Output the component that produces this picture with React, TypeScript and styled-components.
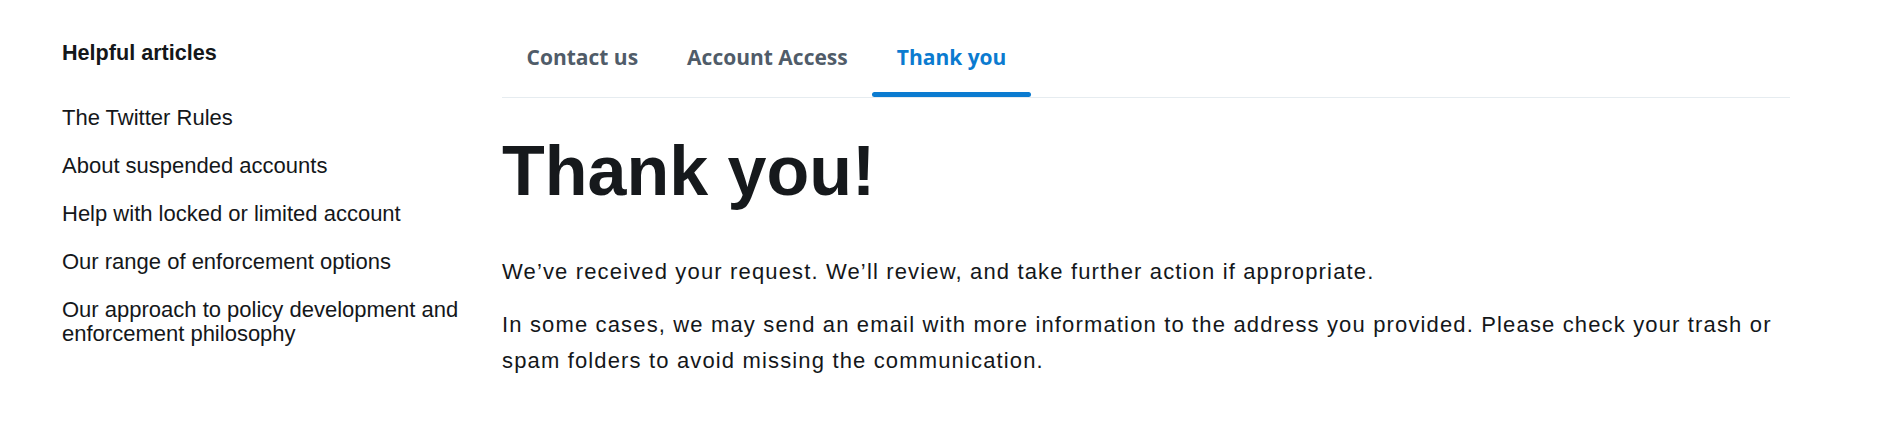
import React, { ReactElement } from 'react';
import styled, { createGlobalStyle, css } from 'styled-components';

const GlobalStyle = createGlobalStyle`
  html, body {
    margin: 0;
    padding: 0;
    background: #ffffff;
  }
  body {
    font-family: "Liberation Sans", Arial, sans-serif;
    color: #14171a;
  }
`;

const Page = styled.div`
  display: flex;
  gap: 40px;
  padding: 41px 109px 0 62px;
  box-sizing: border-box;
  width: 1899px;
  min-height: 440px;
`;

const Sidebar = styled.aside`
  flex: 0 0 400px;
`;

const SideHeading = styled.h2`
  margin: 0 0 41px;
  font-size: 21.6px;
  line-height: 24px;
  font-weight: 700;
  color: #14171a;
`;

const ArticleList = styled.ul`
  list-style: none;
  margin: 0;
  padding: 0;
  display: flex;
  flex-direction: column;
  gap: 24px;
`;

const ArticleLink = styled.a`
  display: block;
  font-size: 22px;
  line-height: 24px;
  color: #14171a;
  text-decoration: none;
`;

const Main = styled.main`
  flex: 1;
  min-width: 0;
`;

const TabBar = styled.nav`
  display: flex;
  border-bottom: 1px solid #e6ecf0;
`;

const Tab = styled.a<{ $active?: boolean }>`
  position: relative;
  padding: 2px 24.5px 26px;
  font-family: "Open Sans", "Noto Sans", sans-serif;
  font-weight: 700;
  font-size: 21px;
  line-height: 28px;
  color: #505c69;
  text-decoration: none;

  ${({ $active }) =>
    $active &&
    css`
      color: #0b7bd0;
      &::after {
        content: '';
        position: absolute;
        left: 0;
        right: 0;
        bottom: 0;
        height: 5px;
        border-radius: 3px;
        background: #0b7bd0;
      }
    `}
`;

const Title = styled.h1`
  margin: 31px 0 41px;
  font-size: 70px;
  line-height: 84px;
  font-weight: 700;
  color: #16191c;
`;

const Paragraph = styled.p`
  margin: 0 0 17px;
  font-size: 22px;
  line-height: 36px;
  letter-spacing: 1.15px;
  color: #14171a;
`;

const articles = [
  'The Twitter Rules',
  'About suspended accounts',
  'Help with locked or limited account',
  'Our range of enforcement options',
  'Our approach to policy development and enforcement philosophy',
];

const tabs = ['Contact us', 'Account Access', 'Thank you'];

const App = (): ReactElement => (
  <>
    <GlobalStyle />
    <Page>
      <Sidebar>
        <SideHeading>Helpful articles</SideHeading>
        <ArticleList>
          {articles.map((title) => (
            <li key={title}>
              <ArticleLink href="#">{title}</ArticleLink>
            </li>
          ))}
        </ArticleList>
      </Sidebar>
      <Main>
        <TabBar>
          {tabs.map((tab) => (
            <Tab key={tab} href="#" $active={tab === 'Thank you'}>
              {tab}
            </Tab>
          ))}
        </TabBar>
        <Title>Thank you!</Title>
        <Paragraph>
          We’ve received your request. We’ll review, and take further action if appropriate.
        </Paragraph>
        <Paragraph>
          In some cases, we may send an email with more information to the address you provided.
          Please check your trash or spam folders to avoid missing the communication.
        </Paragraph>
      </Main>
    </Page>
  </>
);

export default App;
